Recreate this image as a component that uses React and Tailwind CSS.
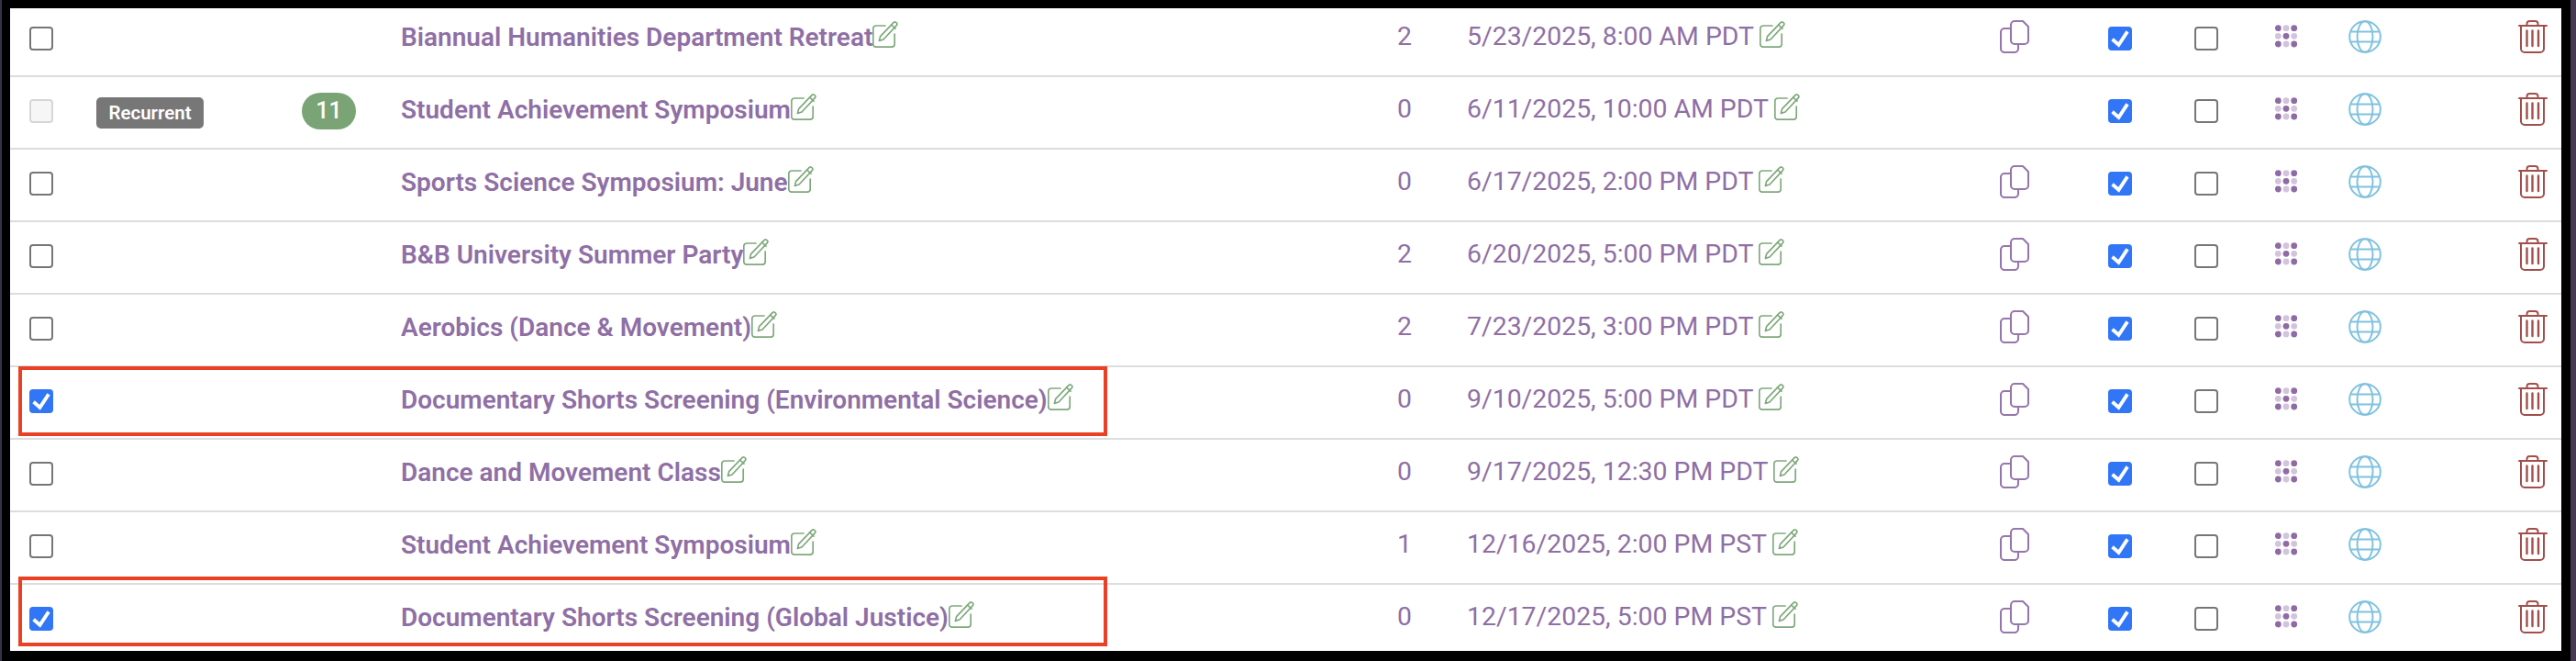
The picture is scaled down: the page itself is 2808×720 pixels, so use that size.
import React from "react";

const rows = [
  { name: "Biannual Humanities Department Retreat", n: 2, date: "5/23/2025, 8:00 AM PDT" },
  { name: "Student Achievement Symposium", n: 0, date: "6/11/2025, 10:00 AM PDT", recurrent: true },
  { name: "Sports Science Symposium: June", n: 0, date: "6/17/2025, 2:00 PM PDT" },
  { name: "B&B University Summer Party", n: 2, date: "6/20/2025, 5:00 PM PDT" },
  { name: "Aerobics (Dance & Movement)", n: 2, date: "7/23/2025, 3:00 PM PDT" },
  { name: "Documentary Shorts Screening (Environmental Science)", n: 0, date: "9/10/2025, 5:00 PM PDT", sel: true },
  { name: "Dance and Movement Class", n: 0, date: "9/17/2025, 12:30 PM PDT" },
  { name: "Student Achievement Symposium", n: 1, date: "12/16/2025, 2:00 PM PST" },
  { name: "Documentary Shorts Screening (Global Justice)", n: 0, date: "12/17/2025, 5:00 PM PST", sel: true },
];

function EditIcon() {
  return (
    <svg viewBox="0 0 28 29" className="w-[28px] h-[29px] shrink-0 -mt-[6px]" fill="none" stroke="#7fa97c" strokeWidth="1.7" strokeLinecap="round" strokeLinejoin="round">
      <path d="M14 5H4a3.2 3.2 0 0 0-3.2 3.2V25a3.2 3.2 0 0 0 3.2 3.2h17a3.2 3.2 0 0 0 3.2-3.2V14" />
      <path d="M23 1.6c1-.9 2.4-.8 3.2.1s.8 2.3-.1 3.2L12 20l-4.6 1.4 1.2-4.8L23 1.6z" />
      <path d="M20.6 4l4.4 4.2" />
    </svg>
  );
}

function CopyIcon() {
  return (
    <svg viewBox="0 0 32 36" className="w-[32px] h-[36px] -mt-[5px]" fill="none" stroke="#9677ab" strokeWidth="2.1" strokeLinejoin="round" strokeLinecap="round">
      <path d="M16 1h9l6 6v15a4 4 0 0 1-4 4H16a4 4 0 0 1-4-4V5a4 4 0 0 1 4-4z" />
      <path d="M12 9H5a4 4 0 0 0-4 4v18a4 4 0 0 0 4 4h11a4 4 0 0 0 4-4v-5" />
    </svg>
  );
}

function DotsIcon() {
  const pts = [];
  for (let r = 0; r < 3; r++) for (let c = 0; c < 3; c++) pts.push([c, r]);
  return (
    <svg viewBox="0 0 25 25" className="w-[25px] h-[25px]">
      {pts.map(([c, r]) => (
        <circle key={`${c}-${r}`} cx={3.3 + c * 8.7} cy={3.7 + r * 8.65} r="3.4" fill={(c + r) % 2 === 0 ? "#8f6ba5" : "#d2c4dc"} />
      ))}
    </svg>
  );
}

function GlobeIcon() {
  return (
    <svg viewBox="0 0 36 36" className="w-[36px] h-[36px] -mt-[5px]" fill="none" stroke="#7fc2df" strokeWidth="2">
      <circle cx="18" cy="18" r="16.8" />
      <ellipse cx="18" cy="18" rx="8.5" ry="16.8" />
      <path d="M3 12.5h30M3 23.5h30" />
    </svg>
  );
}

function TrashIcon() {
  return (
    <svg viewBox="0 0 32 36" className="w-[32px] h-[36px] -mt-[5px]" fill="none" stroke="#a44e4b" strokeWidth="2" strokeLinecap="round" strokeLinejoin="round">
      <path d="M1 6h30" />
      <path d="M9.5 6V4a3 3 0 0 1 3-3h6a3 3 0 0 1 3 3v2" />
      <path d="M3 6v25a4 4 0 0 0 4 4h17a4 4 0 0 0 4-4V6" />
      <path d="M9.5 11.5v16.5M15.5 11.5v16.5M22 11.5v16.5" strokeWidth="2.4" />
    </svg>
  );
}

function Box({ checked, disabled }) {
  if (disabled)
    return <span className="block w-[26px] h-[26px] rounded-[4px] border-2 border-[#d6d6d6] bg-[#f6f6f6]" />;
  if (checked)
    return (
      <span className="flex items-center justify-center w-[26px] h-[26px] rounded-[4px] bg-[#3176f6]">
        <svg viewBox="0 0 26 26" className="w-[26px] h-[26px]" fill="none" stroke="#fff" strokeWidth="3.8" strokeLinecap="square">
          <path d="M6 15l5.5 4.8L20 7" />
        </svg>
      </span>
    );
  return <span className="block w-[26px] h-[26px] rounded-[4px] border-2 border-[#767676] bg-white" />;
}

function Row({ r, first, last }) {
  return (
    <div className={`relative flex items-center shrink-0 ${first ? "h-[75px] pb-[7px] border-b-2 border-[#dddddd]" : last ? "h-[72px] pt-[2px]" : "h-[79px] pb-[3px] border-b-2 border-[#dddddd]"}`}>
      <div className="w-[21px] shrink-0" />
      <div className="w-[73px] shrink-0"><Box checked={r.sel} disabled={r.recurrent} /></div>
      <div className="w-[224px] shrink-0">
        {r.recurrent && (
          <span className="flex items-center justify-center mt-[4px] w-[117px] h-[34px] rounded-[5px] bg-[#777777] text-white text-[20.5px] font-semibold">Recurrent</span>
        )}
      </div>
      <div className="w-[108px] shrink-0">
        {r.recurrent && (
          <span className="flex items-center justify-center w-[59px] h-[40px] rounded-[20px] bg-[#7aa476] text-white text-[25px] font-medium">11</span>
        )}
      </div>
      <div className="w-[1086px] shrink-0 flex items-center text-[28px] font-semibold text-[#8f6fa5] -mt-[3px]">
        <span className="whitespace-nowrap">{r.name}</span>
        <EditIcon />
      </div>
      <div className="w-[76px] shrink-0 text-[28.4px] text-[#8f6fa5] -mt-[3px]">{r.n}</div>
      <div className="w-[581px] shrink-0 flex items-center text-[28.4px] text-[#8f6fa5] -mt-[3px]">
        <span className="whitespace-nowrap">{r.date}</span>
        <span className="w-[6px]" />
        <EditIcon />
      </div>
      <div className="w-[118px] shrink-0 flex">{!r.recurrent && <CopyIcon />}</div>
      <div className="w-[94px] shrink-0"><Box checked /></div>
      <div className="w-[88px] shrink-0"><Box /></div>
      <div className="w-[80px] shrink-0 -mt-[5px]"><DotsIcon /></div>
      <div className="w-[185px] shrink-0"><GlobeIcon /></div>
      <div className="w-[32px] shrink-0"><TrashIcon /></div>
      {r.sel && (
        <div className={`absolute left-[9px] w-[1187px] h-[76px] border-4 border-[#ea4125] ${last ? "top-[-9px]" : "top-[-1px]"}`} />
      )}
    </div>
  );
}

export default function App() {
  return (
    <div className="w-[2808px] h-[720px] bg-black overflow-hidden relative" style={{ fontFamily: "Roboto, sans-serif" }}>
      <div className="absolute left-0 top-0 bottom-0 w-[2px] bg-[#3a3048]" />
      <div className="absolute right-0 top-0 bottom-0 w-[6px] bg-[#463a52]" />
      <div className="ml-[11px] mt-[9px] w-[2781px] h-[700px] bg-white flex flex-col overflow-hidden relative">
        {rows.map((r, i) => (
          <Row key={i} r={r} first={i === 0} last={i === rows.length - 1} />
        ))}
      </div>
    </div>
  );
}
